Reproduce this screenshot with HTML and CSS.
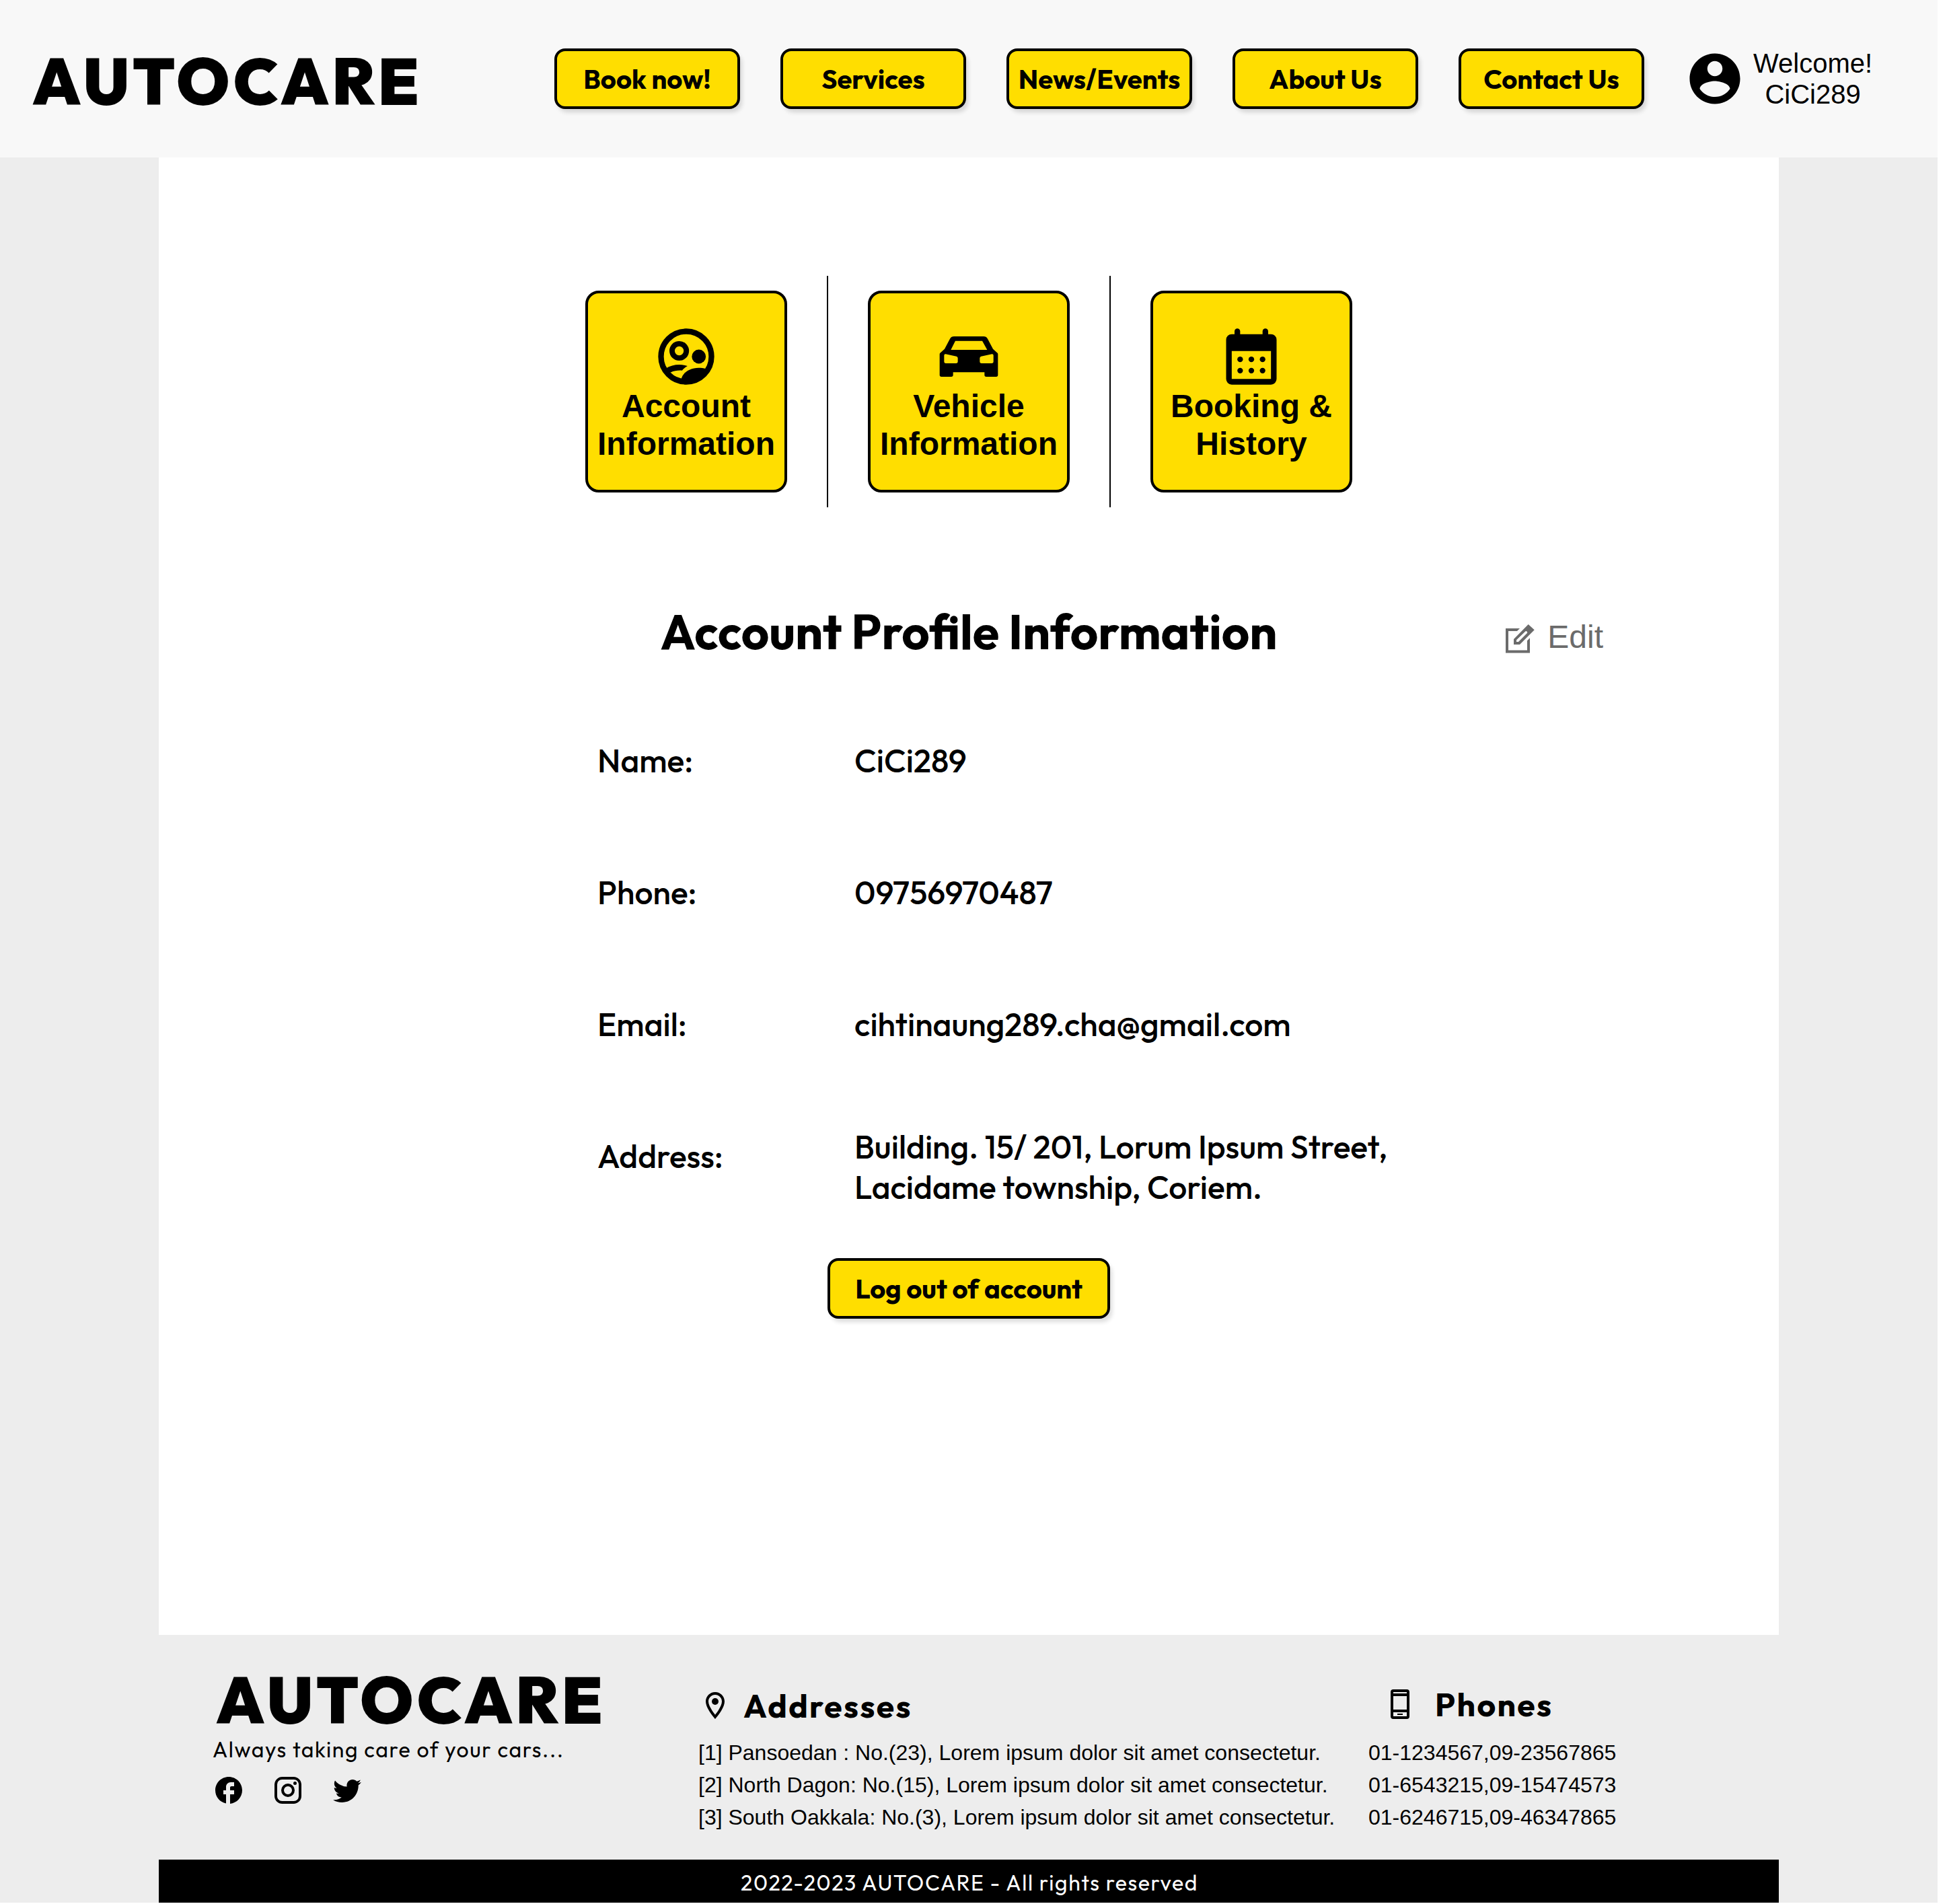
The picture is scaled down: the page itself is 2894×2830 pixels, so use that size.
FILE: index.html
```html
<!DOCTYPE html>
<html lang="en">
<head>
<meta charset="utf-8">
<title>AUTOCARE - Account</title>
<link rel="stylesheet" href="styles.css">
</head>
<body>
<div class="page">
  <header class="header">
    <div class="logo">AUTOCARE</div>
    <nav class="nav">
      <a class="btn">Book now!</a>
      <a class="btn">Services</a>
      <a class="btn">News/Events</a>
      <a class="btn">About Us</a>
      <a class="btn">Contact Us</a>
    </nav>
    <div class="user">
      <svg class="user-icon" viewBox="0 0 24 24"><path d="M12 2C6.48 2 2 6.48 2 12s4.48 10 10 10 10-4.48 10-10S17.52 2 12 2zm0 3c1.66 0 3 1.34 3 3s-1.34 3-3 3-3-1.34-3-3 1.34-3 3-3zm0 14.2c-2.5 0-4.71-1.28-6-3.22.03-1.99 4-3.08 6-3.08 1.99 0 5.97 1.09 6 3.08-1.29 1.94-3.5 3.22-6 3.22z"/></svg>
      <p class="user-text">Welcome!<br>CiCi289</p>
    </div>
  </header>

  <main class="main">
    <div class="tiles">
      <a class="tile">
        <svg class="tile-icon" viewBox="0 0 24 24">
          <circle cx="12" cy="12" r="9" fill="none" stroke="#000" stroke-width="2"/>
          <circle cx="9.5" cy="9.95" r="2.55" fill="none" stroke="#000" stroke-width="1.9"/>
          <circle cx="16.5" cy="12" r="2.5"/>
          <path d="M4.6 16.3C6.1 15.3 7.8 14.88 9.5 14.88c1 0 2 .18 2.95.5-.8.42-1.4.92-1.95 1.6-1.4-.12-2.8.1-4.03.66L5 18.2z"/>
          <path d="M10.27 19.9c.6-2.3 3.1-3.9 6.13-3.9.9 0 1.8.12 2.6.35l.8.5-3.3 3.6L12 21.6l-1.9-.8z"/>
        </svg>
        <span>Account Information</span>
      </a>
      <i class="sep"></i>
      <a class="tile">
        <svg class="tile-icon" viewBox="0 0 300 300">
          <path fill-rule="evenodd" d="M84 60H216Q228 60 233 69L258 116 278 134Q280 136 280 140V232Q280 240 272 240H228Q220 240 220 232V220H80V232Q80 240 72 240H28Q20 240 20 232V140Q20 136 22 134L42 116 67 69Q72 60 84 60zM90 80 70 120H232L210 80zM47 139Q40 138 40 145V172Q40 180 48 180H93Q101 180 101 172V157Q101 151 95 149zM253 139 205 149Q199 151 199 157V172Q199 180 207 180H252Q260 180 260 172V145Q260 138 253 139z"/>
        </svg>
        <span>Vehicle Information</span>
      </a>
      <i class="sep"></i>
      <a class="tile">
        <svg class="tile-icon" viewBox="0 0 24 24">
          <path fill-rule="evenodd" d="M5 4a2 2 0 0 0-2 2v14a2 2 0 0 0 2 2h14a2 2 0 0 0 2-2V6a2 2 0 0 0-2-2zM5 10h14v10H5z"/>
          <rect x="6" y="2" width="2" height="4" rx="1"/><rect x="16" y="2" width="2" height="4" rx="1"/>
          <circle cx="8" cy="13" r="1"/><circle cx="12" cy="13" r="1"/><circle cx="16" cy="13" r="1"/>
          <circle cx="8" cy="17" r="1"/><circle cx="12" cy="17" r="1"/><circle cx="16" cy="17" r="1"/>
        </svg>
        <span>Booking &amp; History</span>
      </a>
    </div>

    <div class="title-row">
      <h1 class="title">Account Profile Information</h1>
      <a class="edit">
        <svg class="edit-icon" viewBox="0 0 48 48">
          <path d="M23 8H2V44.5H38V22.3L34 26.3V40.5H6V12H19z"/>
          <path fill-rule="evenodd" d="M14 24 35.7 2 44.7 10.3 23 32H14zM18 25.3V28H21L33.7 15.3A1.8 1.8 0 0 0 31 12.7z"/>
        </svg>
        <span>Edit</span>
      </a>
    </div>

    <dl class="info">
      <dt>Name:</dt><dd>CiCi289</dd>
      <dt>Phone:</dt><dd>09756970487</dd>
      <dt>Email:</dt><dd>cihtinaung289.cha@gmail.com</dd>
      <dt>Address:</dt><dd class="address">Building. 15/ 201, Lorum Ipsum Street,<br>Lacidame township, Coriem.</dd>
    </dl>

    <a class="btn btn-logout">Log out of account</a>
  </main>

  <footer class="footer">
    <section class="brand">
      <div class="logo">AUTOCARE</div>
      <p class="tagline">Always taking care of your cars...</p>
      <div class="social">
        <svg class="icon" viewBox="0 0 24 24"><path d="M22 12c0-5.52-4.48-10-10-10S2 6.48 2 12c0 4.84 3.44 8.87 8 9.8V15H8v-3h2V9.5C10 7.57 11.57 6 13.5 6H16v3h-2c-.55 0-1 .45-1 1v2h3v3h-3v6.95c5.05-.5 9-4.76 9-9.95z"/></svg>
        <svg class="icon" viewBox="0 0 24 24"><path d="M7.8,2H16.2C19.4,2 22,4.6 22,7.8V16.2A5.8,5.8 0 0,1 16.2,22H7.8C4.6,22 2,19.4 2,16.2V7.8A5.8,5.8 0 0,1 7.8,2M7.6,4A3.6,3.6 0 0,0 4,7.6V16.4C4,18.39 5.61,20 7.6,20H16.4A3.6,3.6 0 0,0 20,16.4V7.6C20,5.61 18.39,4 16.4,4H7.6M17.25,5.5A1.25,1.25 0 0,1 18.5,6.75A1.25,1.25 0 0,1 17.25,8A1.25,1.25 0 0,1 16,6.75A1.25,1.25 0 0,1 17.25,5.5M12,7A5,5 0 0,1 17,12A5,5 0 0,1 12,17A5,5 0 0,1 7,12A5,5 0 0,1 12,7M12,9A3,3 0 0,0 9,12A3,3 0 0,0 12,15A3,3 0 0,0 15,12A3,3 0 0,0 12,9Z"/></svg>
        <svg class="icon" viewBox="0 0 24 24"><path d="M22.46 6c-.77.35-1.6.58-2.46.69.88-.53 1.56-1.37 1.88-2.38-.83.5-1.75.85-2.72 1.05C18.37 4.5 17.26 4 16 4c-2.35 0-4.27 1.92-4.27 4.29 0 .34.04.67.11.98C8.28 9.09 5.11 7.38 3 4.79c-.37.63-.58 1.37-.58 2.15 0 1.49.75 2.81 1.91 3.56-.71 0-1.37-.2-1.95-.5v.03c0 2.08 1.48 3.82 3.44 4.21a4.22 4.22 0 0 1-1.93.07 4.28 4.28 0 0 0 4 2.98 8.521 8.521 0 0 1-5.33 1.84c-.34 0-.68-.02-1.02-.06C3.44 20.29 5.7 21 8.12 21 16 21 20.33 14.46 20.33 8.79c0-.19 0-.37-.01-.56.84-.6 1.56-1.36 2.14-2.23z"/></svg>
      </div>
    </section>
    <section class="addresses">
      <h2 class="foot-title">
        <svg class="icon" viewBox="0 0 24 24"><path d="M12 2C8.13 2 5 5.13 5 9c0 5.25 7 13 7 13s7-7.75 7-13c0-3.87-3.13-7-7-7zM7 9c0-2.76 2.24-5 5-5s5 2.24 5 5c0 2.88-2.88 7.19-5 9.88C9.92 16.21 7 11.85 7 9z"/><circle cx="12" cy="9" r="2.5"/></svg>
        <span>Addresses</span>
      </h2>
      <p>[1] Pansoedan : No.(23), Lorem ipsum dolor sit amet consectetur.</p>
      <p>[2] North Dagon: No.(15), Lorem ipsum dolor sit amet consectetur.</p>
      <p>[3] South Oakkala: No.(3), Lorem ipsum dolor sit amet consectetur.</p>
    </section>
    <section class="phones">
      <h2 class="foot-title">
        <svg class="icon" viewBox="0 0 24 24"><path fill-rule="evenodd" d="M7 1h10a2 2 0 0 1 2 2v18a2 2 0 0 1-2 2H7a2 2 0 0 1-2-2V3a2 2 0 0 1 2-2zM7 3v1h10V3zM7 6v10h10V6zM7 18v3h10v-3zM10 19h4v1h-4z"/></svg>
        <span>Phones</span>
      </h2>
      <p>01-1234567,09-23567865</p>
      <p>01-6543215,09-15474573</p>
      <p>01-6246715,09-46347865</p>
    </section>
  </footer>
  <div class="copyright">2022-2023 AUTOCARE - All rights reserved</div>
</div>
</body>
</html>
```
FILE: styles.css
```css
* { box-sizing: border-box; }

body {
  margin: 0;
  background: #fff;
  color: #000;
  font-family: "Liberation Sans", Arial, sans-serif;
}

p, h1, h2, dl, dd { margin: 0; }

svg { display: block; flex: none; }

.page {
  width: 2880px;
  height: 2828px;
  background: #ededed;
}

.header {
  display: flex;
  align-items: center;
  height: 234px;
  padding-left: 48px;
  background: #f8f8f8;
}

.logo {
  font: 900 96px/96px Outfit, sans-serif;
  letter-spacing: 0.05em;
}

.header .logo {
  width: 776px;
  padding-top: 7px;
}

.nav { display: flex; gap: 60px; }

.btn {
  display: flex;
  align-items: center;
  justify-content: center;
  width: 276px;
  height: 90px;
  border: 4px solid #000;
  border-radius: 16px;
  background: #ffde00;
  box-shadow: 4px 6px 6px -1px rgba(0, 0, 0, 0.14);
  font: 700 40px/50px Outfit, sans-serif;
  white-space: nowrap;
}

.user {
  display: flex;
  align-items: center;
  gap: 12px;
  margin-left: 60px;
}

.user-icon { width: 90px; height: 90px; }

.user-text {
  font-size: 40px;
  line-height: 46px;
  text-align: center;
}

.main {
  width: 2408px;
  height: 2196px;
  margin: 0 auto;
  padding-top: 176px;
  background: #fff;
}

.tiles {
  display: flex;
  align-items: center;
  justify-content: center;
  gap: 59px;
  height: 344px;
}

.tile {
  display: flex;
  flex-direction: column;
  align-items: center;
  width: 300px;
  height: 300px;
  padding-top: 44px;
  border: 4px solid #000;
  border-radius: 20px;
  background: #ffde00;
  font-size: 48px;
  font-weight: 700;
  line-height: 56px;
  text-align: center;
}

.tile-icon { width: 100px; height: 100px; margin-bottom: -4px; }

.sep { width: 2px; height: 344px; background: #000; }

.title-row {
  display: grid;
  grid-template-columns: 1fr auto 1fr;
  align-items: center;
  height: 90px;
  margin-top: 140px;
}

.title {
  grid-column: 2;
  font: 700 72px/90px Outfit, sans-serif;
}

.edit {
  display: flex;
  align-items: center;
  justify-self: end;
  gap: 16px;
  margin-right: 261px;
  padding-top: 16px;
  color: #6b6b6b;
  font-size: 48px;
  line-height: 56px;
}

.edit-icon { width: 48px; height: 48px; margin-top: 5px; fill: #6b6b6b; }

.info {
  display: grid;
  grid-template-columns: 382px 1fr;
  grid-auto-rows: 196px;
  align-items: center;
  margin: 48px 0 54px;
  padding-left: 652px;
  font: 500 48px/60px Outfit, sans-serif;
}

.address { padding-top: 32px; }

.btn-logout { width: 420px; margin: 0 auto; }

.footer {
  display: flex;
  width: 2408px;
  height: 334px;
  margin: 0 auto;
  padding-left: 80px;
}

.brand { width: 722px; padding-top: 49px; }

.brand .logo { padding-left: 5px; }

.tagline {
  margin-top: 5px;
  font: 400 32px/40px Outfit, sans-serif;
  letter-spacing: 0.05em;
}

.social { display: flex; gap: 40px; margin-top: 17px; }

.icon { width: 48px; height: 48px; }

.addresses, .phones { font-size: 32px; line-height: 48px; white-space: nowrap; }

.addresses { width: 996px; padding-top: 75px; }

.phones { padding-top: 73px; }

.foot-title {
  display: flex;
  align-items: center;
  gap: 18px;
  height: 60px;
  margin-bottom: 16px;
  padding-left: 1px;
  font: 700 48px/60px Outfit, sans-serif;
  letter-spacing: 0.05em;
}

.phones .foot-title { gap: 28px; margin-bottom: 18px; padding-left: 23px; }

.copyright {
  width: 2408px;
  height: 66px;
  margin: 0 auto;
  padding: 2px 0 0 2px;
  background: #000;
  color: #fff;
  font: 400 32px/64px Outfit, sans-serif;
  letter-spacing: 0.05em;
  text-align: center;
}
```
